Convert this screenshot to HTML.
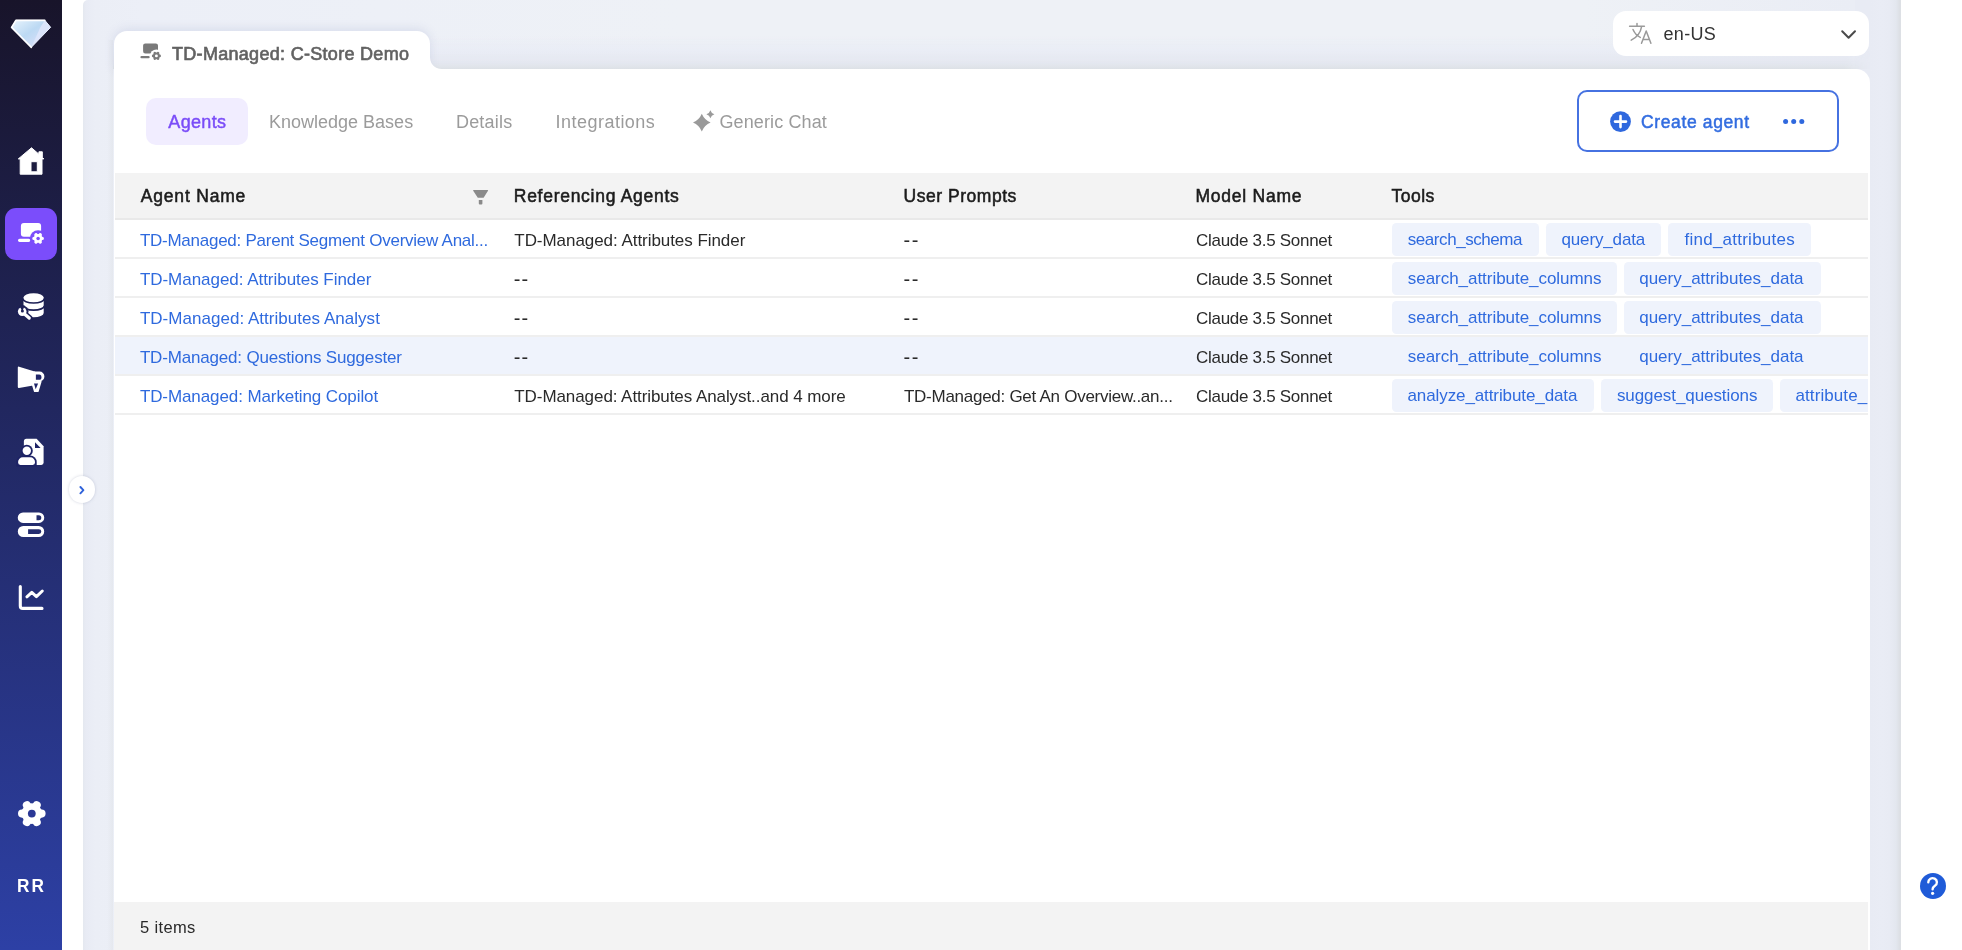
<!DOCTYPE html>
<html lang="en">
<head>
<meta charset="utf-8">
<title>TD-Managed: C-Store Demo</title>
<style>
*{box-sizing:border-box;margin:0;padding:0}
html,body{width:1962px;height:950px;overflow:hidden;background:#fff}
body{font-family:"Liberation Sans",sans-serif;position:relative;color:#262626}
.abs{position:absolute}
.t{position:absolute;white-space:nowrap;line-height:24px;height:24px}
#sidebar{left:0;top:0;width:62px;height:950px;background:linear-gradient(180deg,#18142a 0%,#2d40a5 100%)}
#main{left:83.2px;top:0;width:1818.3px;height:950px;background:linear-gradient(90deg,#e4e8ef 0,#e8ebf4 3px,#ebeef6 12px,#eceff7 60px,#edf0f7 300px,#eef1f6 600px,#eef1f6 1500px,#eaedf5 1770px);border-top-left-radius:5px;overflow:hidden}
#topband{left:30.3px;top:36px;width:1757px;height:33px;-webkit-mask-image:linear-gradient(90deg,#000 0,#000 1732px,transparent 1757px);mask-image:linear-gradient(90deg,#000 0,#000 1732px,transparent 1757px);background:linear-gradient(180deg,rgba(232,235,243,0) 0%,rgba(232,235,245,.6) 40%,rgba(228,231,240,.9) 78%,rgba(224,228,234,1) 93%,#dde1e6 100%)}
#lstrip{left:24.3px;top:40px;width:6px;height:910px;background:linear-gradient(90deg,rgba(230,233,238,0) 0%,rgba(229,232,238,1) 100%)}
#rstrip{left:1772.1px;top:0;width:46.2px;height:950px;background:linear-gradient(90deg,#e8ebf4 0,#e8ebf4 15px,#e9ecf5 27px,#e8ebf4 34px,#e3e7ef 41px,#dcdfe4 45px,#dfe2e6 46.2px)}
#card{left:113.5px;top:68.6px;width:1756.5px;height:882px;background:#fff;border-top-right-radius:14px}
#tab{left:113.5px;top:31.3px;width:316.5px;height:40px;box-shadow:0 -2px 10px rgba(190,198,222,.45);background:#fff;border-radius:13px 13px 0 0}
#tabcurve{left:429.8px;top:58px;width:11px;height:11px;background:radial-gradient(circle at 100% 0,rgba(255,255,255,0) 10.4px,#fff 11.2px)}
#lang{left:1613px;top:11px;width:256px;height:45px;background:#fff;border-radius:13px}
#pill{left:146px;top:98px;width:102px;height:46.5px;background:#f1edff;border-radius:10px}
#create{left:1577px;top:89.8px;width:262px;height:62px;border:2px solid #4672e1;border-radius:10px;background:#fff}
#thead{left:114.5px;top:173.4px;width:1753.5px;height:46.6px;background:#f3f3f3;border-bottom:2px solid #e9e9e9}
.row{left:114.5px;width:1753.5px;height:39px;border-bottom:2px solid #efefef}
.row.hov{background:#eff3fc}
#tfoot{left:114px;top:902px;width:1754px;height:48px;background:#f3f3f3}
#tags{left:1380px;top:220px;width:488px;height:195px;overflow:hidden}
.tag{position:absolute;height:33px;background:#eff3fc;border-radius:4.5px}
#exp{left:68.8px;top:476.4px;width:26.3px;height:26.3px;border-radius:50%;background:#fff;box-shadow:0 0 3px rgba(120,130,160,.35)}
#help{left:1919.5px;top:872.5px;width:26px;height:26px;border-radius:50%;background:#1f5bd8}
#navact{left:5px;top:208px;width:52px;height:52px;border-radius:11px;background:#7b4dfb}
svg{position:absolute;overflow:visible}
</style>
</head>
<body>
<div id="sidebar" class="abs"></div>
<div id="main" class="abs"><div id="rstrip" class="abs"></div><div id="topband" class="abs"></div><div id="lstrip" class="abs"></div></div>
<div id="tab" class="abs"></div>
<div id="tabcurve" class="abs"></div>
<div id="card" class="abs"></div>
<div id="lang" class="abs"></div>
<div id="pill" class="abs"></div>
<div id="create" class="abs"></div>
<div id="thead" class="abs"></div>
<div class="row abs" style="top:220px"></div>
<div class="row abs" style="top:259px"></div>
<div class="row abs" style="top:298px"></div>
<div class="row abs hov" style="top:337px"></div>
<div class="row abs" style="top:376px"></div>
<div id="tfoot" class="abs"></div>
<div id="tags" class="abs">
<!-- coordinates relative to (1380,220) -->
<div class="tag" style="left:11.7px;top:2.8px;width:147.3px"></div>
<div class="tag" style="left:165.6px;top:2.8px;width:115.6px"></div>
<div class="tag" style="left:288.1px;top:2.8px;width:143.1px"></div>
<div class="tag" style="left:11.7px;top:41.8px;width:225.7px"></div>
<div class="tag" style="left:243.5px;top:41.8px;width:197px"></div>
<div class="tag" style="left:11.7px;top:80.8px;width:225.7px"></div>
<div class="tag" style="left:243.5px;top:80.8px;width:197px"></div>
<div class="tag" style="left:11.7px;top:158.8px;width:202.5px"></div>
<div class="tag" style="left:220.8px;top:158.8px;width:172.6px"></div>
<div class="tag" style="left:400.4px;top:158.8px;width:160px"></div>
</div>
<div id="navact" class="abs"></div>
<div id="exp" class="abs"></div>
<div id="help" class="abs"></div>
<svg width="1962" height="950" viewBox="0 0 1962 950" style="left:0;top:0">
<defs><linearGradient id="dg" x1="0" y1="0" x2="1" y2="1"><stop offset="0" stop-color="#e8f4fd"/><stop offset="0.45" stop-color="#bcd9f3"/><stop offset="1" stop-color="#e4e2fb"/></linearGradient></defs>
<path d="M16 20.3 H44.8 L50.6 27.3 L31.3 47.3 L11.6 27.4 Z" fill="url(#dg)" stroke="#eef5ff" stroke-width="1" stroke-linejoin="round"/>
<path d="M44.8 20.3 L50.6 27.3 L31.3 47.3 L40.5 27 Z" fill="#dfe6fb" opacity=".85"/>
<path d="M44.8 20.3 H16 L11.6 27.4 L31.3 47.3" fill="none" stroke="#fff" stroke-width="1.7" stroke-linejoin="round" stroke-linecap="round" opacity=".95"/>
<path fill="#fff" fill-rule="evenodd" stroke="#fff" stroke-width="1" stroke-linejoin="round" d="M31.5 147.8 L38.9 154.2 V151.8 H42.3 V157.3 L43.9 158.9 H42 V174.2 H20.2 V158.9 H18.3 Z M31 161.7 H37.3 V171.8 H31 Z"/>
<path fill="#fff" d="M23.9 222.9 H38.1 a3 3 0 0 1 3 3 V233.7 a3 3 0 0 1 -3 3 H23.9 a3 3 0 0 1 -3 -3 V225.9 a3 3 0 0 1 3 -3 Z"/><rect x="18" y="238.7" width="12.3" height="3.2" rx="1.6" fill="#fff"/><circle cx="38.1" cy="238.4" r="8.2" fill="#7b4dfb"/><circle cx="38.1" cy="238.4" r="4.3" fill="#fff"/><path d="M38.1 238.4 L42.25 238.40 M38.1 238.4 L40.18 241.99 M38.1 238.4 L36.03 241.99 M38.1 238.4 L33.95 238.40 M38.1 238.4 L36.02 234.81 M38.1 238.4 L40.18 234.81 " stroke="#fff" stroke-width="3.4" stroke-linecap="round" fill="none"/><circle cx="38.1" cy="238.4" r="1.75" fill="#7b4dfb"/>
<path fill="#7a7a7a" d="M145.3 43.4 H155.8 a2.2 2.2 0 0 1 2.2 2.2 V51.3 a2.2 2.2 0 0 1 -2.2 2.2 H145.3 a2.2 2.2 0 0 1 -2.2 -2.2 V45.6 a2.2 2.2 0 0 1 2.2 -2.2 Z"/><rect x="140.4" y="56" width="9.3" height="2.3" rx="1.15" fill="#7a7a7a"/><circle cx="156.4" cy="55.9" r="6.4" fill="#fff"/><circle cx="156.4" cy="55.9" r="3.3" fill="#7a7a7a"/><path d="M156.4 55.9 L159.65 55.90 M156.4 55.9 L158.03 58.71 M156.4 55.9 L154.78 58.71 M156.4 55.9 L153.15 55.90 M156.4 55.9 L154.78 53.09 M156.4 55.9 L158.03 53.09 " stroke="#7a7a7a" stroke-width="2.6" stroke-linecap="round" fill="none"/><circle cx="156.4" cy="55.9" r="1.45" fill="#fff"/>
<path fill="#fff" d="M23.5 297.6 a10.1 4.3 0 0 1 20.2 0 V313 a10.1 4.3 0 0 1 -20.2 0 Z"/>
<path fill="none" stroke="#1d2056" stroke-width="1.7" d="M22.8 298.6 A10.8 4.4 0 0 0 44.4 298.6"/>
<path fill="none" stroke="#1d2056" stroke-width="1.7" d="M22.8 305.8 A10.8 4.4 0 0 0 44.4 305.8"/>
<circle cx="22.2" cy="311.6" r="6.3" fill="#1d2056"/>
<path d="M24 313.6 L29.3 318.2" stroke="#1d2056" stroke-width="6.4" stroke-linecap="round"/>
<circle cx="22.2" cy="311.6" r="4.3" fill="#fff"/>
<path d="M24.5 314 L29.2 318.1" stroke="#fff" stroke-width="3.3" stroke-linecap="round"/>
<path d="M22.4 311.4 L24.6 305.5 L19.5 306 Z" fill="#1d2056"/>
<circle cx="22.4" cy="311" r="1.5" fill="#1d2056"/>
<path fill="#fff" stroke="#fff" stroke-width="2" stroke-linejoin="round" d="M18.8 367.6 L34.4 372.4 V384.2 L18.8 386.9 Z"/>
<path fill="#fff" d="M34 371.6 H39.5 a4.9 4.9 0 0 1 0 9.8 H34 Z"/>
<path fill="#20266a" d="M35.9 374.5 H39.2 a2.2 2.6 0 0 1 0 5.3 H35.9 Z"/>
<path fill="#fff" stroke="#fff" stroke-width="1.6" stroke-linejoin="round" d="M32 382.6 L34.7 391.2 H37.9 L40.8 381.4 Z"/>
<path fill="#20266a" d="M34 383.4 H38.1 L35.7 389.3 Z"/>
<path fill="#fff" d="M26.4 438.8 H36.6 L43.6 446.3 V462.6 a2.3 2.3 0 0 1 -2.3 2.3 H23.9 V441.3 a2.5 2.5 0 0 1 2.5 -2.5 Z"/>
<path fill="#1d2265" d="M35 442.2 L40.6 447.9 H35 Z"/>
<circle cx="26.8" cy="450.7" r="6" fill="#1d2265"/>
<path fill="#1d2265" d="M16.4 466.6 V462 a6.4 6.4 0 0 1 6.4 -6.4 H30.3 a6.4 6.4 0 0 1 6.4 6.4 V466.6 Z"/>
<circle cx="26.8" cy="450.7" r="4.2" fill="#fff"/>
<path fill="#fff" d="M18.1 462.6 V462 a4.7 4.7 0 0 1 4.7 -4.7 H30.3 a4.7 4.7 0 0 1 4.7 4.7 V462.6 a2.3 2.3 0 0 1 -2.3 2.3 H20.4 a2.3 2.3 0 0 1 -2.3 -2.3 Z"/>
<path fill="#fff" fill-rule="evenodd" d="M23 512.4 H39 a5.25 5.25 0 0 1 0 10.5 H23 a5.25 5.25 0 0 1 0 -10.5 Z M36.5 515.3 V520.3 H38.8 a2.5 2.5 0 0 0 0 -5 Z"/>
<path fill="#fff" fill-rule="evenodd" d="M23.3 526 H38.7 a5.5 5.5 0 0 1 0 11 H23.3 a5.5 5.5 0 0 1 0 -11 Z M28.1 529.2 V534 H38.9 a2.4 2.4 0 0 0 0 -4.8 Z"/>
<path fill="none" stroke="#fff" stroke-width="3.1" stroke-linecap="round" stroke-linejoin="round" d="M20.3 586.6 V606 a2.4 2.4 0 0 0 2.4 2.4 H42"/>
<path fill="none" stroke="#fff" stroke-width="3" stroke-linecap="round" stroke-linejoin="round" d="M26.9 596.8 L31.8 592.4 L36.4 596.6 L42.3 591"/>
<circle cx="31.8" cy="813.6" r="10.3" fill="#fff"/><path d="M31.8 813.6 L41.50 813.60 M31.8 813.6 L36.65 822.00 M31.8 813.6 L26.95 822.00 M31.8 813.6 L22.10 813.60 M31.8 813.6 L26.95 805.20 M31.8 813.6 L36.65 805.20 " stroke="#fff" stroke-width="8.2" stroke-linecap="round" fill="none"/>
<circle cx="31.8" cy="813.6" r="3.9" fill="#2a3896"/>
<path fill="none" stroke="#2f62da" stroke-width="1.9" stroke-linecap="round" stroke-linejoin="round" d="M80.4 487 L83.4 490.15 L80.4 493.3"/>
<path fill="#8a8a8a" d="M473.6 190 H487.6 a.5 .5 0 0 1 .4 .8 L483.6 197.8 H477.8 L473.2 190.8 a.5 .5 0 0 1 .4 -.8 Z M478.8 200 H482.4 V203.6 a1 1 0 0 1 -1 1 H479.8 a1 1 0 0 1 -1 -1 Z"/>
<path fill="#9a9a9a" d="M701.80 113.80 Q704.44 119.96 710.60 122.60 Q704.44 125.24 701.80 131.40 Q699.16 125.24 693.00 122.60 Q699.16 119.96 701.80 113.80Z"/>
<path fill="#9a9a9a" d="M710.40 110.20 Q711.28 113.32 714.40 114.20 Q711.28 115.08 710.40 118.20 Q709.52 115.08 706.40 114.20 Q709.52 113.32 710.40 110.20Z"/>
<g fill="none" stroke="#9a9a9a" stroke-width="1.5" stroke-linecap="round" stroke-linejoin="round"><path d="M1629.6 26.2 H1644.4 M1637 23.6 V26 M1641.6 26.6 C1640.6 32.5 1636.5 37.5 1631.2 40.2 M1633 29.5 C1634.5 33 1637.3 36 1640.3 37.4"/><path d="M1641.5 43.3 L1646.2 31 L1650.9 43.3 M1643.1 39.4 H1649.3"/></g>
<path fill="none" stroke="#4a4a4a" stroke-width="2" stroke-linecap="round" stroke-linejoin="round" d="M1842.2 31.2 L1848.6 37.7 L1855 31.2"/>
<circle cx="1620.5" cy="121.6" r="10.4" fill="#2f68de"/>
<path stroke="#fff" stroke-width="2.6" stroke-linecap="round" d="M1615 121.6 H1626 M1620.5 116.1 V127.1"/>
<circle cx="1785.6" cy="121.4" r="2.5" fill="#2f68de"/>
<circle cx="1793.7" cy="121.4" r="2.5" fill="#2f68de"/>
<circle cx="1801.8" cy="121.4" r="2.5" fill="#2f68de"/>
<path fill="none" stroke="#fff" stroke-width="2.4" stroke-linecap="round" stroke-linejoin="round" d="M1928.3 882.3 a4.3 4.1 0 1 1 6.6 3.4 c-1.6 1.1 -2.3 1.9 -2.3 3.6"/>
<circle cx="1932.6" cy="893.3" r="1.6" fill="#fff"/>
</svg>
<div class="abs" style="left:0;top:0;width:1868px;height:950px;overflow:hidden;will-change:transform">
<span class="t" style="left:172.0px;top:41.5px;font-size:18px;font-weight:400;color:#626262;letter-spacing:0.300px;-webkit-text-stroke:0.65px #626262">TD-Managed: C-Store Demo</span>
<span class="t" style="left:1663.5px;top:21.6px;font-size:18px;font-weight:400;color:#333;letter-spacing:0.317px">en-US</span>
<span class="t" style="left:168.3px;top:109.5px;font-size:18px;font-weight:400;color:#7a4cf8;letter-spacing:0.341px;-webkit-text-stroke:0.45px #7a4cf8">Agents</span>
<span class="t" style="left:269.0px;top:109.5px;font-size:18px;font-weight:400;color:#9b9b9b;letter-spacing:0.003px">Knowledge Bases</span>
<span class="t" style="left:455.9px;top:109.5px;font-size:18px;font-weight:400;color:#9b9b9b;letter-spacing:0.236px">Details</span>
<span class="t" style="left:555.5px;top:109.5px;font-size:18px;font-weight:400;color:#9b9b9b;letter-spacing:0.481px">Integrations</span>
<span class="t" style="left:719.4px;top:109.5px;font-size:18px;font-weight:400;color:#9b9b9b;letter-spacing:0.126px">Generic Chat</span>
<span class="t" style="left:1641.0px;top:109.5px;font-size:17.5px;font-weight:400;color:#336de0;letter-spacing:0.628px;-webkit-text-stroke:0.5px #336de0">Create agent</span>
<span class="t" style="left:140.8px;top:184.1px;font-size:17.5px;font-weight:400;color:#1c1c1c;letter-spacing:0.808px;-webkit-text-stroke:0.55px #1c1c1c">Agent Name</span>
<span class="t" style="left:513.8px;top:184.1px;font-size:17.5px;font-weight:400;color:#1c1c1c;letter-spacing:0.721px;-webkit-text-stroke:0.55px #1c1c1c">Referencing Agents</span>
<span class="t" style="left:903.5px;top:184.1px;font-size:17.5px;font-weight:400;color:#1c1c1c;letter-spacing:0.535px;-webkit-text-stroke:0.55px #1c1c1c">User Prompts</span>
<span class="t" style="left:1195.5px;top:184.1px;font-size:17.5px;font-weight:400;color:#1c1c1c;letter-spacing:0.765px;-webkit-text-stroke:0.55px #1c1c1c">Model Name</span>
<span class="t" style="left:1391.5px;top:184.1px;font-size:17.5px;font-weight:400;color:#1c1c1c;letter-spacing:0.473px;-webkit-text-stroke:0.55px #1c1c1c">Tools</span>
<span class="t" style="left:139.9px;top:228.5px;font-size:17px;font-weight:400;color:#2f6ade;letter-spacing:-0.255px">TD-Managed: Parent Segment Overview Anal...</span>
<span class="t" style="left:139.9px;top:267.5px;font-size:17px;font-weight:400;color:#2f6ade;letter-spacing:-0.036px">TD-Managed: Attributes Finder</span>
<span class="t" style="left:139.9px;top:306.5px;font-size:17px;font-weight:400;color:#2f6ade;letter-spacing:0.031px">TD-Managed: Attributes Analyst</span>
<span class="t" style="left:139.9px;top:345.5px;font-size:17px;font-weight:400;color:#2f6ade;letter-spacing:-0.179px">TD-Managed: Questions Suggester</span>
<span class="t" style="left:139.9px;top:384.5px;font-size:17px;font-weight:400;color:#2f6ade;letter-spacing:-0.095px">TD-Managed: Marketing Copilot</span>
<span class="t" style="left:514.3px;top:228.5px;font-size:17px;font-weight:400;color:#2a2a2a;letter-spacing:-0.050px">TD-Managed: Attributes Finder</span>
<span class="t" style="left:513.8px;top:267.1px;font-size:20px;font-weight:400;color:#2a2a2a;letter-spacing:1.072px">--</span>
<span class="t" style="left:513.8px;top:306.1px;font-size:20px;font-weight:400;color:#2a2a2a;letter-spacing:1.072px">--</span>
<span class="t" style="left:513.8px;top:345.1px;font-size:20px;font-weight:400;color:#2a2a2a;letter-spacing:1.072px">--</span>
<span class="t" style="left:514.3px;top:384.5px;font-size:17px;font-weight:400;color:#2a2a2a;letter-spacing:-0.075px">TD-Managed: Attributes Analyst..and 4 more</span>
<span class="t" style="left:903.5px;top:228.1px;font-size:20px;font-weight:400;color:#2a2a2a;letter-spacing:1.522px">--</span>
<span class="t" style="left:903.5px;top:267.1px;font-size:20px;font-weight:400;color:#2a2a2a;letter-spacing:1.522px">--</span>
<span class="t" style="left:903.5px;top:306.1px;font-size:20px;font-weight:400;color:#2a2a2a;letter-spacing:1.522px">--</span>
<span class="t" style="left:903.5px;top:345.1px;font-size:20px;font-weight:400;color:#2a2a2a;letter-spacing:1.522px">--</span>
<span class="t" style="left:904.0px;top:384.5px;font-size:17px;font-weight:400;color:#2a2a2a;letter-spacing:-0.271px">TD-Managed: Get An Overview..an...</span>
<span class="t" style="left:1196.0px;top:228.5px;font-size:17px;font-weight:400;color:#2a2a2a;letter-spacing:-0.290px">Claude 3.5 Sonnet</span>
<span class="t" style="left:1196.0px;top:267.5px;font-size:17px;font-weight:400;color:#2a2a2a;letter-spacing:-0.290px">Claude 3.5 Sonnet</span>
<span class="t" style="left:1196.0px;top:306.5px;font-size:17px;font-weight:400;color:#2a2a2a;letter-spacing:-0.290px">Claude 3.5 Sonnet</span>
<span class="t" style="left:1196.0px;top:345.5px;font-size:17px;font-weight:400;color:#2a2a2a;letter-spacing:-0.290px">Claude 3.5 Sonnet</span>
<span class="t" style="left:1196.0px;top:384.5px;font-size:17px;font-weight:400;color:#2a2a2a;letter-spacing:-0.290px">Claude 3.5 Sonnet</span>
<span class="t" style="left:1407.8px;top:227.6px;font-size:17px;font-weight:400;color:#2f6ade;letter-spacing:-0.447px">search_schema</span>
<span class="t" style="left:1561.5px;top:227.6px;font-size:17px;font-weight:400;color:#2f6ade;letter-spacing:-0.148px">query_data</span>
<span class="t" style="left:1684.5px;top:227.6px;font-size:17px;font-weight:400;color:#2f6ade;letter-spacing:0.243px">find_attributes</span>
<span class="t" style="left:1407.8px;top:266.6px;font-size:17px;font-weight:400;color:#2f6ade;letter-spacing:-0.040px">search_attribute_columns</span>
<span class="t" style="left:1639.2px;top:266.6px;font-size:17px;font-weight:400;color:#2f6ade;letter-spacing:-0.003px">query_attributes_data</span>
<span class="t" style="left:1407.8px;top:305.6px;font-size:17px;font-weight:400;color:#2f6ade;letter-spacing:-0.040px">search_attribute_columns</span>
<span class="t" style="left:1639.2px;top:305.6px;font-size:17px;font-weight:400;color:#2f6ade;letter-spacing:-0.003px">query_attributes_data</span>
<span class="t" style="left:1407.8px;top:344.6px;font-size:17px;font-weight:400;color:#2f6ade;letter-spacing:-0.040px">search_attribute_columns</span>
<span class="t" style="left:1639.2px;top:344.6px;font-size:17px;font-weight:400;color:#2f6ade;letter-spacing:-0.003px">query_attributes_data</span>
<span class="t" style="left:1407.5px;top:383.6px;font-size:17px;font-weight:400;color:#2f6ade;letter-spacing:-0.099px">analyze_attribute_data</span>
<span class="t" style="left:1616.9px;top:383.6px;font-size:17px;font-weight:400;color:#2f6ade;letter-spacing:-0.074px">suggest_questions</span>
<span class="t" style="left:1795.5px;top:383.6px;font-size:17px;font-weight:400;color:#2f6ade;letter-spacing:0.084px">attribute_</span>
<span class="t" style="left:140.1px;top:914.6px;font-size:16.5px;font-weight:400;color:#2a2a2a;letter-spacing:0.344px">5 items</span>
<span class="t" style="left:17.4px;top:874.0px;font-size:18.6px;font-weight:700;color:#fff;letter-spacing:2.200px;transform-origin:0 50%;transform:scaleX(0.9269)">RR</span>
</div>
</body>
</html>
